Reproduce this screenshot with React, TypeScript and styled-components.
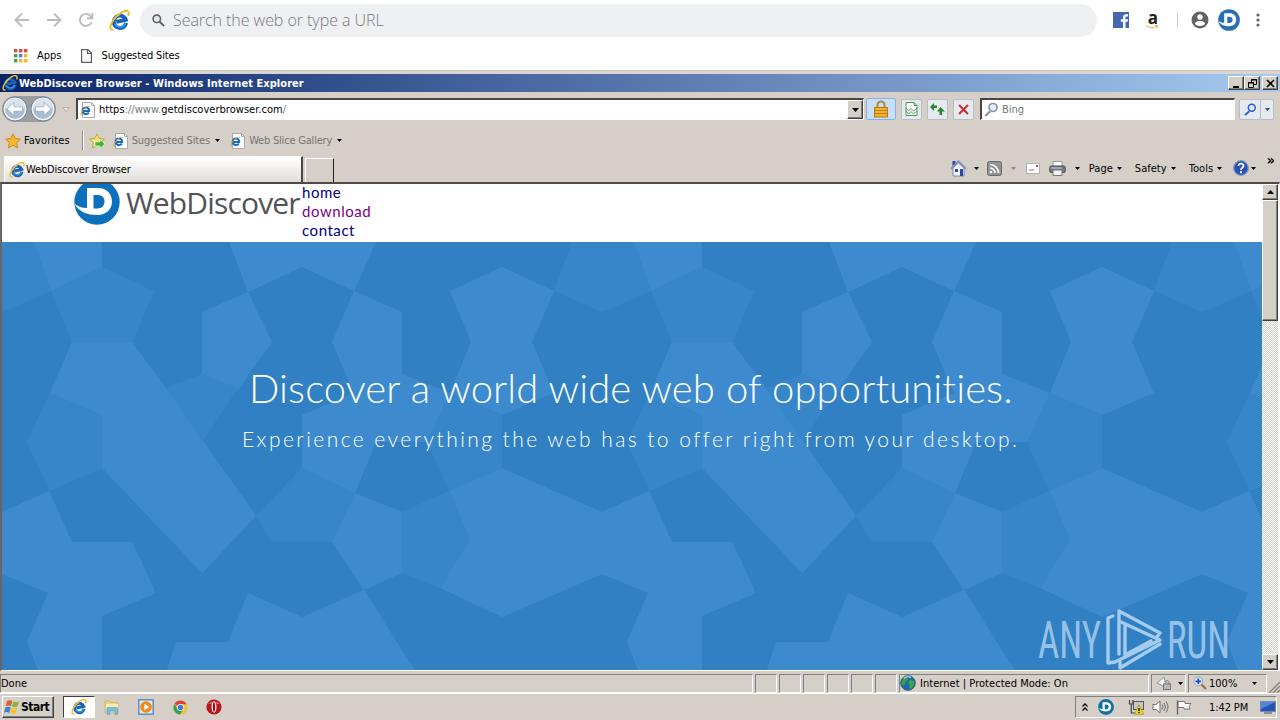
import React from "react";
import styled, { createGlobalStyle, css } from "styled-components";

const GlobalStyle = createGlobalStyle`
  * {
    box-sizing: border-box;
  }
  body {
    margin: 0;
    overflow: hidden;
    background: #d4d0c8;
    color: #000;
    font: 11px "DejaVu Sans Condensed", "DejaVu Sans", sans-serif;
    font-stretch: condensed;
  }
  svg {
    display: block;
    flex: none;
  }
`;

/* ---------- icons ---------- */

function IeIcon({ size = 16 }: { size?: number }) {
  return (
    <svg width={size} height={size} viewBox="0 0 16 16" fill="none">
      <g transform="rotate(-12 8 8)">
        <path d="M12.500 10.800A4.700 4.700 0 1 1 12.800 8.500H5.400" stroke="#1a62b4" strokeWidth="3" />
        <path d="M12 10.900A4.500 4.500 0 0 1 4 10" stroke="#2f9be6" strokeWidth="1.300" />
        <path d="M4 6.700C4.800 4.700 6.500 3.900 8.600 3.900" stroke="#6fcdf5" strokeWidth="1.400" />
      </g>
      <path
        d="M3.500 14.800C.2 15.800.4 12 3.200 7.800 6.600 3 12.500-.8 14.600 1.200c.7.800.5 2-.1 3.200"
        stroke="#ecba35"
        strokeWidth="1.500"
      />
    </svg>
  );
}

function PageIeIcon() {
  return (
    <svg width="16" height="16" viewBox="0 0 16 16" fill="none">
      <path d="M2.500.5h9l3 3v12h-12z" fill="#fff" stroke="#a9a9b4" />
      <path d="M11.500.5v3h3" stroke="#a9a9b4" />
      <path d="M8.800 10.400A3.300 3.300 0 1 1 9.200 8.900H3.600" stroke="#1b68c0" strokeWidth="2" />
      <path d="M2 13.300C0 13.500 1 10 4 7s5.500-3.600 6-2" stroke="#d8a928" />
    </svg>
  );
}

function WebDiscoverIcon({ size, color }: { size: number; color: string }) {
  return (
    <svg width={size} height={size} viewBox="0 0 46 46">
      <circle cx="23" cy="23" r="22.700" fill={color} />
      <path
        d="M13 9H24c8.500 0 14 5.500 14 13.500S32 36 23.500 36C13 36 5 33 .4 24.500c3.500 3 7.500 4.500 12.600 4.500z"
        fill="#fff"
      />
      <path d="M19.500 16h4c4.500 0 7 2.500 7 6.500s-2.500 7-7 7h-4z" fill={color} />
    </svg>
  );
}

function StarIcon({ arrow }: { arrow?: boolean }) {
  return (
    <svg width="16" height="16" viewBox="0 0 16 16">
      <path
        d="M8 .8l2.200 4.700 5.200.6-3.800 3.600 1 5.200L8 12.300l-4.600 2.600 1-5.200L.6 6.100l5.200-.6z"
        fill={arrow ? "#f4e27a" : "#f7b733"}
        stroke={arrow ? "#b9a23a" : "#d17f16"}
        strokeWidth=".9"
      />
      {arrow && <path d="M6 9h5V6.500l5 4.500-5 4.500V13H6z" fill="#3fb52c" stroke="#fff" strokeWidth=".6" />}
    </svg>
  );
}

function MagnifierIcon({ color, size = 15, glass = "none" }: { color: string; size?: number; glass?: string }) {
  return (
    <svg width={size} height={size} viewBox="0 0 15 15" fill="none" stroke={color}>
      <path d="M6 9.500L1.200 14" strokeWidth="2.200" />
      <circle cx="9" cy="5.500" r="4" fill={glass} strokeWidth="1.700" />
    </svg>
  );
}

function NavIcon({ flip }: { flip?: boolean }) {
  return (
    <svg width="26" height="26" viewBox="0 0 26 26" transform={flip ? "scale(-1 1)" : undefined}>
      <circle cx="13" cy="13" r="12" fill="#c3ccd6" stroke="#76818d" />
      <circle cx="13" cy="13" r="10.600" fill="#a9bed3" stroke="#f3f6f9" strokeWidth="1.400" />
      <path d="M3 12a10 10 0 0 1 20 0c-6 2-14 2-20 0z" fill="#d9e3ed" />
      <path d="M5 13l7-6.500v4.300h8.500v4.400H12v4.300z" fill="#fff" stroke="#90a4ba" strokeWidth=".7" />
    </svg>
  );
}

function ChromeGlyph({ kind }: { kind: "back" | "forward" | "reload" }) {
  const d = {
    back: "M16 9H3M9 2.500L2.500 9 9 15.500",
    forward: "M2 9h13M9 2.500L15.500 9 9 15.500",
    reload: "M14.500 11A6 6 0 1 1 13.300 4.800L15 6.500M15.300 2v5.200H10",
  }[kind];
  return (
    <svg width="18" height="18" viewBox="0 0 18 18" fill="none" stroke="#bbbcbe" strokeWidth="1.900">
      <path d={d} />
    </svg>
  );
}

function AppsIcon() {
  const colors = ["#e04a3f", "#e04a3f", "#e04a3f", "#3aa757", "#4285f4", "#f2b824", "#3aa757", "#f2b824", "#f2b824"];
  return (
    <svg width="14" height="14" viewBox="0 0 14 14">
      {colors.map((color, i) => (
        <rect key={i} x={(i % 3) * 5} y={Math.floor(i / 3) * 5} width="3.400" height="3.400" fill={color} />
      ))}
    </svg>
  );
}

function LockIcon() {
  return (
    <svg width="16" height="18" viewBox="0 0 16 18">
      <path d="M4.500 8V5a3.500 3.500 0 0 1 7 0v3" fill="none" stroke="#a98b3e" strokeWidth="2" />
      <rect x="1.500" y="7.500" width="13" height="9.500" fill="#eeb22c" stroke="#b9780d" />
      <path d="M2 10.500h12M2 13.500h12" stroke="#c28112" />
    </svg>
  );
}

function HomeIcon() {
  return (
    <svg width="17" height="17" viewBox="0 0 17 17">
      <path d="M3 8v8h11V8L8.500 3z" fill="#f4f6fb" stroke="#7485b5" />
      <path d="M2.500 1h3v5h-3z" fill="#2c4aa6" />
      <path d="M1 9l7.500-7.500L16 9" fill="none" stroke="#8291bd" strokeWidth="2" />
      <path d="M5 9h3v3H5zM10 9h3v7h-3z" fill="#2b49a8" />
    </svg>
  );
}

function FeedIcon() {
  return (
    <svg width="15" height="15" viewBox="0 0 15 15">
      <rect x=".5" y=".5" width="14" height="14" rx="2" fill="#929292" stroke="#6c6c6c" />
      <path d="M3 7a5 5 0 0 1 5 5M3 3.500A8.500 8.500 0 0 1 11.500 12" fill="none" stroke="#fff" strokeWidth="1.700" />
      <circle cx="4" cy="11" r="1.300" fill="#fff" />
    </svg>
  );
}

function MailIcon() {
  return (
    <svg width="14" height="11" viewBox="0 0 14 11">
      <rect x=".5" y=".5" width="13" height="10" fill="#fff" stroke="#b1b1b1" />
      <rect x="10" y="2" width="2" height="2" fill="#d43d42" />
      <path d="M3 7h5" stroke="#c55" />
    </svg>
  );
}

function PrinterIcon() {
  return (
    <svg width="17" height="15" viewBox="0 0 17 15">
      <path d="M4 .5h9V6H4z" fill="#fff" stroke="#999" />
      <rect x=".8" y="5" width="15.400" height="6.500" rx="1.500" fill="#737780" stroke="#4b4d54" />
      <path d="M4 9h9v5.500H4z" fill="#f3f4f7" stroke="#777" />
      <path d="M2 7h11" stroke="#d5d8df" />
    </svg>
  );
}

function HelpIcon() {
  return (
    <svg width="16" height="16" viewBox="0 0 16 16">
      <circle cx="8" cy="8" r="7.300" fill="#2552bb" stroke="#8796bc" strokeWidth="1.200" />
      <path d="M5.500 6c.2-3.200 5.400-2.900 5 .1C10.300 7.700 8 7.800 8 10" fill="none" stroke="#fff" strokeWidth="1.800" />
      <rect x="7" y="11.200" width="2" height="2" fill="#fff" />
    </svg>
  );
}

function GlobeIcon() {
  return (
    <svg width="16" height="16" viewBox="0 0 16 16">
      <circle cx="8" cy="8" r="7.300" fill="#1b69b5" stroke="#365b77" />
      <path d="M3 3c3-2 5-1 5 1s-3 2-3 4-2 3-3.500 1zM10 5l4 1v4l-3 4-2-1 1-3-2-2z" fill="#40a53e" />
      <path d="M4 3.200c2-1.600 5-1.800 7-.4" stroke="#b9e2f4" strokeWidth="1.200" fill="none" />
    </svg>
  );
}

function WindowsIcon() {
  return (
    <svg width="16" height="16" viewBox="0 0 16 16">
      <path d="M3 2c2-1 3.500-1 5.300 0L7 7.200c-2-1-3.500-.8-5.300 0z" fill="#e5602b" />
      <path d="M9.300 2.400c2 .9 3.700.9 5.600 0l-1.400 5.200c-2 .9-3.600.9-5.500 0z" fill="#86b839" />
      <path d="M1.400 8.400c2-.9 3.500-.9 5.300 0l-1.400 5.300c-2-.9-3.500-.9-5.300 0z" fill="#3f7fd0" />
      <path d="M7.700 8.800c2 .9 3.600.9 5.500 0l-1.400 5.200c-2 .9-3.600.9-5.500 0z" fill="#f5c12d" />
    </svg>
  );
}

function ExplorerIcon() {
  return (
    <svg width="16" height="16" viewBox="0 0 16 16">
      <path d="M1 2h5l1 1.500h7V14H1z" fill="#ead487" stroke="#c7ae5b" strokeWidth=".7" />
      <path d="M2 5h12v5H2z" fill="#f7ebad" />
      <path d="M3 15.500V9.500q0-1 1-1h8.500q1 0 1 1v6H11V12H5.500v3.500z" fill="#7cbbe2" stroke="#559dcc" strokeWidth=".6" />
    </svg>
  );
}

function PlayerIcon() {
  return (
    <svg width="16" height="16" viewBox="0 0 16 16">
      <rect x=".8" y=".8" width="14.400" height="14.400" fill="#d8e8f5" stroke="#5589c4" strokeWidth="1.400" />
      <circle cx="8" cy="8" r="5.800" fill="#f18a16" />
      <path d="M6.300 4.700v6.600L11.200 8z" fill="#fff" />
    </svg>
  );
}

function ChromeIcon() {
  return (
    <svg width="15" height="15" viewBox="0 0 16 16">
      <circle cx="8" cy="8" r="7.500" fill="#f3c42d" />
      <path d="M8 8L1.500 4.200A7.500 7.500 0 0 1 14.500 4.500H8z" fill="#d84437" />
      <path d="M1.500 4.200A7.500 7.500 0 0 0 7.500 15.500L11 9.800 8 8 5 9.800z" fill="#3a9d58" />
      <circle cx="8" cy="8" r="3.700" fill="#f2f2f2" />
      <circle cx="8" cy="8" r="2.900" fill="#4179d8" />
    </svg>
  );
}

function OperaIcon() {
  return (
    <svg width="16" height="16" viewBox="0 0 16 16">
      <circle cx="8" cy="8" r="7.600" fill="#b81620" />
      <path d="M2 5a7 5 0 0 1 12 0" fill="#db5c60" />
      <ellipse cx="8" cy="8" rx="2.500" ry="5.800" fill="#f3eaea" />
      <ellipse cx="8" cy="8" rx="1.100" ry="4.800" fill="#921018" />
    </svg>
  );
}

/* Polygons of one 600px wide tile of the hero background. */
const LIGHT = [
  "32,0 100,0 100,25 49,49",
  "70,100 130,100 164,146 202,200 254,274 200,331 100,226 100,173 48,151",
  "47,249 70,300 130,300 154,351 100,374 100,428 36,428 25,400 46,351 0,332 0,270",
  "200,70 246,50 270,100 236,148 200,132",
  "227,0 374,0 352,49 300,25 246,50",
  "352,49 400,70 400,132 352,151 330,100",
  "448,49 500,25 552,49 530,100 552,151 500,173 448,151 469,100",
  "300,173 352,151 400,132 448,151 425,200 374,200 353,251 300,226",
  "447,249 500,226 600,270 600,332 500,375 438,346 468,298",
  "353,251 400,270 400,331 362,348 330,300",
  "246,351 300,375 362,348 400,408 413,428 165,428 174,400 226,400",
];

const MID = [
  "0,0 32,0 49,49 0,70",
  "570,0 600,0 600,70 552,49",
  "100,25 152,49 130,100 70,100 49,49",
  "48,151 100,173 100,226 48,249 25,200",
  "164,146 200,132 236,146 200,200",
  "425,200 448,151 500,173 500,226 447,249",
  "400,270 447,249 468,298 438,346 400,331",
  "254,274 300,226 353,251 330,300 270,300",
];

function HeroPattern() {
  return (
    <PatternSvg width="1260" height="428">
      <defs>
        <pattern id="cells" width="600" height="428" patternUnits="userSpaceOnUse">
          <rect width="600" height="428" fill="#3080c3" />
          {LIGHT.map((points) => (
            <polygon key={points} points={points} fill="#3d8bce" />
          ))}
          {MID.map((points) => (
            <polygon key={points} points={points} fill="#3786ca" />
          ))}
        </pattern>
      </defs>
      <rect width="1260" height="428" fill="url(#cells)" />
    </PatternSvg>
  );
}

function AnyRunMark() {
  return (
    <Watermark width="200" height="62" viewBox="0 0 200 62">
      <g fill="#a5cbed" fillOpacity=".9" fontFamily="Roboto" fontSize="51" fontWeight="400">
        <text x="2" y="49" textLength="63" lengthAdjust="spacingAndGlyphs">
          ANY
        </text>
        <text x="131" y="49" textLength="63" lengthAdjust="spacingAndGlyphs">
          RUN
        </text>
      </g>
      <g fill="none" stroke="#a5cbed" strokeWidth="3.400" strokeLinejoin="round" strokeLinecap="round">
        <path d="M77 7l-5 2v45l7-1 45-22-39-18" />
        <path d="M83 45V2l41 22-4 5M89 47V17M84 59l40-24M89 46l26-14M84 53v6" />
      </g>
    </Watermark>
  );
}

function Arrow({ color }: { color?: string }) {
  return (
    <svg width="5" height="3" viewBox="0 0 5 3">
      <path d="M0 0h5L2.500 3z" fill={color ?? "#000"} />
    </svg>
  );
}

/* ---------- page ---------- */

export default function App() {
  return (
    <>
      <GlobalStyle />
      <Screen>
        <ChromeToolbar>
          <ChromeGlyph kind="back" />
          <ChromeGlyph kind="forward" />
          <ChromeGlyph kind="reload" />
          <IeIcon size={21} />
          <Omnibox>
            <svg width="13" height="13" viewBox="0 0 13 13" fill="none" stroke="#5f6368" strokeWidth="1.600">
              <circle cx="4.800" cy="4.800" r="3.700" />
              <path d="M7.500 7.500L12 12" strokeWidth="2" />
            </svg>
            <OmniboxText>Search the web or type a URL</OmniboxText>
          </Omnibox>
          <ChromeActions>
            <svg width="16" height="16" viewBox="0 0 16 16">
              <rect width="16" height="16" fill="#4467b0" />
              <path d="M10 16V9.700H7.800V7.200H10V5.500C10 3.200 11.300 2.200 13 2.200h2v2.300h-1.300c-1 0-1.200.5-1.200 1.200v1.500H15l-.4 2.500h-2.100V16z" fill="#fff" />
            </svg>
            <AmazonBox>
              <b>a</b>
              <svg width="14" height="4" viewBox="0 0 14 4">
                <path d="M1 .5c4 3 8 3 11 .5M10 .5h2.500L12 3" fill="none" stroke="#f0a93c" />
              </svg>
            </AmazonBox>
            <ChromeDivider />
            <svg width="18" height="18" viewBox="0 0 18 18">
              <circle cx="9" cy="9" r="8.500" fill="#5f6266" />
              <circle cx="9" cy="6" r="2.700" fill="#fff" />
              <path d="M3.800 12.800c1.700-4 8.700-4 10.400 0-2.400 3-8 3-10.400 0z" fill="#fff" />
            </svg>
            <ProfileBadge>
              <WebDiscoverIcon size={22} color="#2c6eb5" />
            </ProfileBadge>
            <svg width="4" height="14" viewBox="0 0 4 14" fill="#5f6266">
              <circle cx="2" cy="2" r="1.600" />
              <circle cx="2" cy="7" r="1.600" />
              <circle cx="2" cy="12" r="1.600" />
            </svg>
          </ChromeActions>
        </ChromeToolbar>

        <BookmarksBar>
          <AppsIcon />
          <Label $left={9}>Apps</Label>
          <PageIconBox>
            <svg width="11" height="14" viewBox="0 0 11 14" fill="none" stroke="#5c5f63">
              <path d="M.6.6H7l3.400 3.400v9.400H.6zM6.500.6v3.900h3.900" strokeWidth="1.200" />
            </svg>
          </PageIconBox>
          <Label $left={10} $spacing={-0.12}>Suggested Sites</Label>
        </BookmarksBar>

        <TitleBar>
          <IeIcon />
          <TitleText>WebDiscover Browser - Windows Internet Explorer</TitleText>
          <CaptionButtons>
            <CaptionButton>
              <svg width="9" height="9"><path d="M1 7h6v2H1z" /></svg>
            </CaptionButton>
            <CaptionButton>
              <svg width="9" height="9" fill="none" stroke="#000">
                <path d="M3.500 3V.5h5v5H6M3 1h6M.5 3.500h5v5h-5zM0 4h6" />
              </svg>
            </CaptionButton>
            <CaptionButton $gap>
              <svg width="9" height="9" stroke="#000" strokeWidth="1.600"><path d="M1 1l7 7M8 1L1 8" /></svg>
            </CaptionButton>
          </CaptionButtons>
        </TitleBar>

        <AddressRow>
          <NavButtons>
            <NavIcon />
            <NavIcon flip />
          </NavButtons>
          <svg width="8" height="5" viewBox="0 0 8 5">
            <path d="M.7.500h6.600L4 4.300z" fill="#e8e5e0" stroke="#a9a6a0" strokeWidth=".8" />
          </svg>
          <AddressField>
            <PageIeIcon />
            <Url>
              https<Grey>://www.</Grey>getdiscoverbrowser.com<Grey>/</Grey>
            </Url>
            <SmallButton>
              <svg width="7" height="4"><path d="M0 0h7L3.500 4z" /></svg>
            </SmallButton>
          </AddressField>
          <LockButton>
            <LockIcon />
          </LockButton>
          <ToolButton>
            <svg width="13" height="14" viewBox="0 0 13 14" fill="none" stroke="#4c9b59">
              <path d="M1 .5h8l3 3v10H1zM9 .5v3h3" fill="#fff" />
              <path d="M1 6l2.500 3L6 6.500 8.500 9 12 6M1 9l2.500 3L6 9.500 8.500 12 12 9" />
            </svg>
          </ToolButton>
          <ToolButton>
            <svg width="15" height="14" viewBox="0 0 15 14" fill="#228b32">
              <path d="M0 5l4-4v2.500h3V6H4v3z" />
              <path d="M15 9.500h-3V13H9.500V9.500H7L10.500 5z" />
            </svg>
          </ToolButton>
          <ToolButton>
            <svg width="11" height="11" viewBox="0 0 11 11" stroke="#cc2f32" strokeWidth="2">
              <path d="M1 1l9 9M10 1l-9 9" />
            </svg>
          </ToolButton>
          <SearchField>
            <MagnifierIcon color="#8993a4" glass="#e7f0fa" />
            <Grey>Bing</Grey>
          </SearchField>
          <SearchButton>
            <MagnifierIcon color="#245fd8" size={13} />
          </SearchButton>
          <SearchButton $narrow>
            <Arrow color="#1b4f93" />
          </SearchButton>
        </AddressRow>

        <FavoritesRow>
          <StarIcon />
          <Label $left={3} $spacing={0.12}>Favorites</Label>
          <RowDivider />
          <StarIcon arrow />
          <FavoriteLink $left={8}>
            <PageIeIcon />
            <Label $left={3} $grey $spacing={-0.1}>Suggested Sites</Label>
            <Arrow />
          </FavoriteLink>
          <FavoriteLink $left={10}>
            <PageIeIcon />
            <Label $left={3} $grey $spacing={-0.2}>Web Slice Gallery</Label>
            <Arrow />
          </FavoriteLink>
        </FavoritesRow>

        <TabRow>
          <ActiveTab>
            <IeIcon />
            <Label $left={1} $spacing={-0.17}>WebDiscover Browser</Label>
          </ActiveTab>
          <NewTab />
          <CommandBar>
            <HomeIcon />
            <Command $width={20}><Arrow /></Command>
            <FeedIcon />
            <Command $width={24}><Arrow color="#8d8981" /></Command>
            <MailIcon />
            <Command $width={9} />
            <PrinterIcon />
            <Command $width={23}><Arrow /></Command>
            <Command $width={46}>Page<Arrow /></Command>
            <Command $width={54}>Safety<Arrow /></Command>
            <Command $width={44}>Tools<Arrow /></Command>
            <HelpIcon />
            <Command $width={9}><Arrow /></Command>
            <Chevrons>»</Chevrons>
          </CommandBar>
        </TabRow>

        <Viewport>
          <Page>
            <SiteHeader>
              <LogoMark>
                <WebDiscoverIcon size={46} color="#0c70bd" />
              </LogoMark>
              <LogoText>WebDiscover</LogoText>
              <SiteNav>
                <SiteLink>home</SiteLink>
                <SiteLink $visited>download</SiteLink>
                <SiteLink>contact</SiteLink>
              </SiteNav>
            </SiteHeader>
            <Hero>
              <HeroPattern />
              <HeroTitle>Discover a world wide web of opportunities.</HeroTitle>
              <HeroText>Experience everything the web has to offer right from your desktop.</HeroText>
              <AnyRunMark />
            </Hero>
          </Page>
          <Scrollbar>
            <ScrollButton>
              <svg width="7" height="4"><path d="M0 4h7L3.500 0z" /></svg>
            </ScrollButton>
            <ScrollThumb />
            <ScrollTrack />
            <ScrollButton>
              <svg width="7" height="4"><path d="M0 0h7L3.500 4z" /></svg>
            </ScrollButton>
          </Scrollbar>
        </Viewport>

        <StatusBar>
          <StatusCell $grow>Done</StatusCell>
          {[0, 1, 2, 3, 4, 5].map((n) => (
            <StatusCell key={n} $width={22} />
          ))}
          <StatusCell $width={250}>
            <GlobeIcon />
            <Label $left={4} $spacing={0.04}>Internet | Protected Mode: On</Label>
          </StatusCell>
          <StatusCell $width={35}>
            <StatusIcons>
              <svg width="16" height="14" viewBox="0 0 16 14">
                <path d="M1 7l7-6 1 5 5 2-7 2z" fill="#f8f8f8" stroke="#999" />
                <path d="M9 8V6.500a2 2 0 0 1 4 0V8" fill="none" stroke="#888" />
                <rect x="7.500" y="8" width="7" height="5.500" fill="#bbb" stroke="#777" />
              </svg>
              <Arrow />
            </StatusIcons>
          </StatusCell>
          <StatusCell $width={79}>
            <ZoomBox>
              <svg width="14" height="14" viewBox="0 0 14 14" fill="none">
                <path d="M8 8l5 5" stroke="#9a7040" strokeWidth="2.200" />
                <circle cx="5.300" cy="5.300" r="4.300" fill="#dcecfb" stroke="#8fa7c6" />
                <path d="M5.300 2.500v5.600M2.500 5.300h5.600" stroke="#1b50b5" strokeWidth="1.800" />
              </svg>
              <span>100%</span>
              <Arrow />
            </ZoomBox>
          </StatusCell>
          <Grip width="11" height="12" viewBox="0 0 11 12">
            <path d="M0 12L11 1M4 12l7-7M8 12l3-3" stroke="#8a867e" strokeWidth="1.500" />
          </Grip>
        </StatusBar>

        <Taskbar>
          <StartButton>
            <WindowsIcon />
            Start
          </StartButton>
          <TaskButton $active><IeIcon /></TaskButton>
          <TaskButton><ExplorerIcon /></TaskButton>
          <TaskButton><PlayerIcon /></TaskButton>
          <TaskButton><ChromeIcon /></TaskButton>
          <TaskButton><OperaIcon /></TaskButton>
          <Tray>
            <svg width="6" height="9" viewBox="0 0 6 9" fill="none" stroke="#000" strokeWidth="1.300">
              <path d="M.5 3.500L3 1l2.500 2.500M.5 7.500L3 5l2.500 2.500" />
            </svg>
            <TrayItem $left={10}><WebDiscoverIcon size={16} color="#0f6da8" /></TrayItem>
            <TrayItem $left={14}>
              <svg width="16" height="16" viewBox="0 0 16 16" fill="none">
                <rect x="5.500" y="2.500" width="10" height="8" fill="#c7c7c7" stroke="#555" />
                <path d="M1.500 1v4h3.500V1M3.300 5v9h4" stroke="#444" strokeWidth="1.200" />
                <path d="M11 6l4.700 9.300H6.300z" fill="#f6d728" stroke="#ad8c12" strokeWidth=".7" />
                <path d="M11 9v3.200M11 13v1.300" stroke="#000" strokeWidth="1.300" />
              </svg>
            </TrayItem>
            <TrayItem $left={8}>
              <svg width="17" height="14" viewBox="0 0 17 14" fill="none" stroke="#6f6f6f">
                <path d="M1 4.500h3L8 1v12L4 9.500H1z" fill="#fff" />
                <path d="M10 4.500q2 2.500 0 5M12 3q3 4 0 8M14 1.500q4 5.500 0 11" />
              </svg>
            </TrayItem>
            <TrayItem $left={7}>
              <svg width="16" height="15" viewBox="0 0 16 15">
                <path d="M2 1.500h7v2h6l-2 3 1 2.500H8V7.500H2z" fill="#fff" stroke="#777" />
                <path d="M1.500.5v14" stroke="#666" strokeWidth="1.400" />
              </svg>
            </TrayItem>
            <Clock>1:42 PM</Clock>
            <svg width="16" height="13" viewBox="0 0 16 13">
              <rect x=".5" y=".5" width="15" height="10" fill="#2356b4" stroke="#7888a8" />
              <path d="M1 1h14L1 8z" fill="#5187d9" />
              <path d="M4 12h8" stroke="#777" strokeWidth="1.500" />
            </svg>
          </Tray>
        </Taskbar>
      </Screen>
    </>
  );
}

/* ---------- styles ---------- */

const raised = css`
  background: #d4d0c8;
  border: 1px solid;
  border-color: #fff #404040 #404040 #fff;
  box-shadow: inset -1px -1px 0 #808080;
`;

const sunken = css`
  border: 1px solid;
  border-color: #808080 #fff #fff #808080;
`;

const Screen = styled.div`
  display: flex;
  flex-direction: column;
  width: 1280px;
  height: 720px;
  overflow: hidden;
  background: #d5cfc8;
  white-space: nowrap;
`;

const Row = styled.div`
  display: flex;
  flex: none;
  align-items: center;
`;

const ChromeToolbar = styled(Row)`
  gap: 14px;
  height: 41px;
  padding: 0 0 1px 13px;
  background: #fff;
`;

const Omnibox = styled(Row)`
  width: 957px;
  height: 33px;
  margin-left: -4px;
  padding-left: 12px;
  border-radius: 17px;
  background: #eef0f1;
`;

const OmniboxText = styled.span`
  margin-left: 8px;
  color: #777a7d;
  font: 300 16px "Open Sans", sans-serif;
  letter-spacing: -0.05px;
`;

const ChromeActions = styled(Row)`
  gap: 12px;
  margin-left: 2px;
`;

const AmazonBox = styled.div`
  width: 16px;
  height: 18px;
  margin: 0 4px 0 4px;
  text-align: center;

  b {
    display: block;
    height: 14px;
    color: #222;
    font: bold 17px/13px "Open Sans", sans-serif;
  }
`;

const ChromeDivider = styled.div`
  width: 1px;
  height: 16px;
  margin-right: 1px;
  background: #ccc;
`;

const ProfileBadge = styled.div`
  margin: 0 4px 0 -3px;
`;

const BookmarksBar = styled(Row)`
  height: 29px;
  padding-left: 14px;
  background: #fff;
`;

const PageIconBox = styled.div`
  margin-left: 19px;
`;

const Label = styled.span<{ $left: number; $spacing?: number; $grey?: boolean }>`
  margin-left: ${({ $left }) => $left}px;
  color: ${({ $grey }) => ($grey ? "#77736d" : "inherit")};
  letter-spacing: ${({ $spacing }) => $spacing ?? 0}px;
`;

const Grey = styled.span`
  color: #777;
`;

const TitleBar = styled(Row)`
  height: 22px;
  padding: 3px 2px 0;
  border-top: 1px solid #c9c1bc;
  box-shadow: inset 0 3px 0 #d9d5d0;
  background: linear-gradient(90deg, #0a246a, #a6caf0);
`;

const TitleText = styled.span`
  margin-left: 1px;
  color: #fff;
  font-weight: bold;
  letter-spacing: 0.05px;
`;

const CaptionButtons = styled(Row)`
  margin-left: auto;
`;

const CaptionButton = styled.div<{ $gap?: boolean }>`
  ${raised}
  display: flex;
  align-items: center;
  justify-content: center;
  width: 16px;
  height: 14px;
  margin-left: ${({ $gap }) => ($gap ? 2 : 0)}px;
`;

const AddressRow = styled(Row)`
  height: 34px;
  padding-left: 2px;
`;

const NavButtons = styled(Row)`
  gap: 2px;
  margin-right: 6px;
  border-radius: 14px;
  background: #9a9da2;
`;

const AddressField = styled(Row)`
  width: 788px;
  height: 22px;
  margin-left: 6px;
  padding-left: 2px;
  border: 2px solid;
  border-width: 2px 1px 1px 2px;
  border-color: #484642 #fff #fff #484642;
  background: #fff;
`;

const Url = styled.span`
  flex: 1;
  margin-left: 3px;
  letter-spacing: 0.03px;
`;

const SmallButton = styled.div`
  ${raised}
  display: flex;
  align-items: center;
  justify-content: center;
  width: 16px;
  height: 19px;
`;

const ToolButton = styled.div`
  display: flex;
  align-items: center;
  justify-content: center;
  width: 21px;
  height: 21px;
  margin-left: 5px;
  border: 1px solid #b5bdc9;
  border-radius: 2px;
  background: #e6e9ee;
`;

const LockButton = styled(ToolButton)`
  width: 30px;
  height: 22px;
  margin-left: 2px;
  border-color: #86b0ea;
  background: #c9dff9;
`;

const SearchField = styled(AddressField)`
  gap: 3px;
  width: 255px;
  margin-left: 6px;
  padding-left: 2px;
`;

const SearchButton = styled(ToolButton)<{ $narrow?: boolean }>`
  width: ${({ $narrow }) => ($narrow ? 14 : 22)}px;
  margin-left: ${({ $narrow }) => ($narrow ? -1 : 4)}px;
`;

const FavoritesRow = styled(Row)`
  height: 30px;
  padding: 0 0 1px 5px;
`;

const RowDivider = styled.div`
  width: 2px;
  height: 20px;
  margin: 0 5px 0 12px;
  border-left: 1px solid #8f8a82;
  border-right: 1px solid #fff;
`;

const FavoriteLink = styled(Row)<{ $left: number }>`
  margin-left: ${({ $left }) => $left}px;

  > svg:last-child {
    margin-left: 5px;
  }
`;

const TabRow = styled(Row)`
  align-items: flex-end;
  height: 26px;
  padding-left: 4px;
`;

const ActiveTab = styled(Row)`
  width: 299px;
  height: 26px;
  padding-left: 4px;
  border-right: 2px solid #4a4845;
  border-top: 1px solid #fff;
  border-left: 1px solid #fff;
  background: linear-gradient(#fff, #e1ded9);
`;

const NewTab = styled.div`
  width: 29px;
  height: 24px;
  margin: 0 0 0 2px;
  border: 1px solid #fff;
  border-right: 1px solid #222;
  border-bottom: 0;
`;

const CommandBar = styled(Row)`
  height: 28px;
  margin-left: auto;
  padding-right: 5px;
`;

const Command = styled.span<{ $width: number }>`
  display: flex;
  flex: none;
  align-items: center;
  justify-content: ${({ $width }) => ($width < 30 ? "center" : "flex-start")};
  gap: 4px;
  width: ${({ $width }) => $width}px;
`;

const Chevrons = styled.b`
  align-self: flex-start;
  margin-left: 9px;
  font-size: 14px;
  line-height: 13px;
`;

const Viewport = styled.div`
  display: flex;
  flex: none;
  height: 489px;
  border: 1px solid #808080;
  border-top: 2px solid #4c4a47;
  border-left: 2px solid #666;
  border-bottom: 1px solid #fff;
  border-right-color: #fff;
  background: #fff;
`;

const Page = styled.div`
  flex: none;
  width: 1260px;
`;

const SiteHeader = styled.div`
  display: flex;
  height: 58px;
  overflow: hidden;
  padding-left: 72px;
`;

const LogoMark = styled.div`
  margin-top: -5px;
`;

const LogoText = styled.span`
  width: 176px;
  margin-left: 6px;
  color: #525355;
  font: 30px/38px "Open Sans", sans-serif;
  letter-spacing: -0.85px;
`;

const SiteNav = styled.nav`
  display: flex;
  flex-direction: column;
  margin-top: -1px;
`;

const SiteLink = styled.a<{ $visited?: boolean }>`
  color: ${({ $visited }) => ($visited ? "#800080" : "#000080")};
  font: 15px/19px Lato, sans-serif;
  letter-spacing: 0.55px;
`;

const Hero = styled.section`
  position: relative;
  height: 428px;
  overflow: hidden;
  padding-top: 121px;
  color: #fff;
`;

const PatternSvg = styled.svg`
  position: absolute;
  top: 0;
  left: 0;
`;

const HeroTitle = styled.h1`
  position: relative;
  margin: 0 0 0 247px;
  font: 300 40px/50px Lato, sans-serif;
  letter-spacing: 0.1px;
`;

const HeroText = styled.p`
  position: relative;
  margin: 11px 0 0 240px;
  font: 300 21px/30px Lato, sans-serif;
  letter-spacing: 2.44px;
`;

const Watermark = styled.svg`
  position: absolute;
  right: 26px;
  bottom: -1px;
`;

const Scrollbar = styled.div`
  display: flex;
  flex-direction: column;
  width: 16px;
`;

const ScrollButton = styled.div`
  ${raised}
  display: flex;
  flex: none;
  align-items: center;
  justify-content: center;
  height: 16px;
`;

const ScrollThumb = styled.div`
  ${raised}
  flex: none;
  height: 121px;
`;

const ScrollTrack = styled.div`
  flex: 1;
  background: repeating-conic-gradient(#fff 0 25%, #d4d0c8 0 50%) 0 0 / 2px 2px;
`;

const StatusBar = styled(Row)`
  gap: 2px;
  height: 22px;
  padding-top: 2px;
`;

const StatusCell = styled(Row)<{ $width?: number; $grow?: boolean }>`
  ${sunken}
  flex: ${({ $grow }) => ($grow ? 1 : "none")};
  width: ${({ $width }) => ($width ? `${$width}px` : "auto")};
  height: 19px;
`;

const StatusIcons = styled(Row)`
  gap: 6px;
  padding-left: 4px;
`;

const ZoomBox = styled(Row)`
  gap: 2px;
  padding-left: 4px;

  > svg:last-child {
    margin-left: 13px;
  }
`;

const Grip = styled.svg`
  align-self: flex-end;
`;

const Taskbar = styled(Row)`
  height: 27px;
  padding: 1px 3px 1px 2px;
  border-top: 1px solid #fff;
`;

const StartButton = styled(Row)`
  ${raised}
  gap: 1px;
  width: 52px;
  height: 22px;
  margin-right: 9px;
  padding-left: 1px;
  font-weight: bold;
  font-size: 12px;
  letter-spacing: -0.5px;
`;

const TaskButton = styled.div<{ $active?: boolean }>`
  display: flex;
  align-items: center;
  justify-content: center;
  width: ${({ $active }) => ($active ? 32 : 34)}px;
  height: 22px;
  ${({ $active }) =>
    $active &&
    css`
      border: 1px solid;
      border-color: #404040 #fff #fff #404040;
      background: #fff;
    `}
`;

const Tray = styled(Row)`
  ${sunken}
  width: 202px;
  height: 22px;
  margin-left: auto;
  padding-left: 6px;
`;

const TrayItem = styled.div<{ $left: number }>`
  margin-left: ${({ $left }) => $left}px;
`;

const Clock = styled.span`
  margin: 0 12px 0 17px;
  letter-spacing: -0.1px;
`;
